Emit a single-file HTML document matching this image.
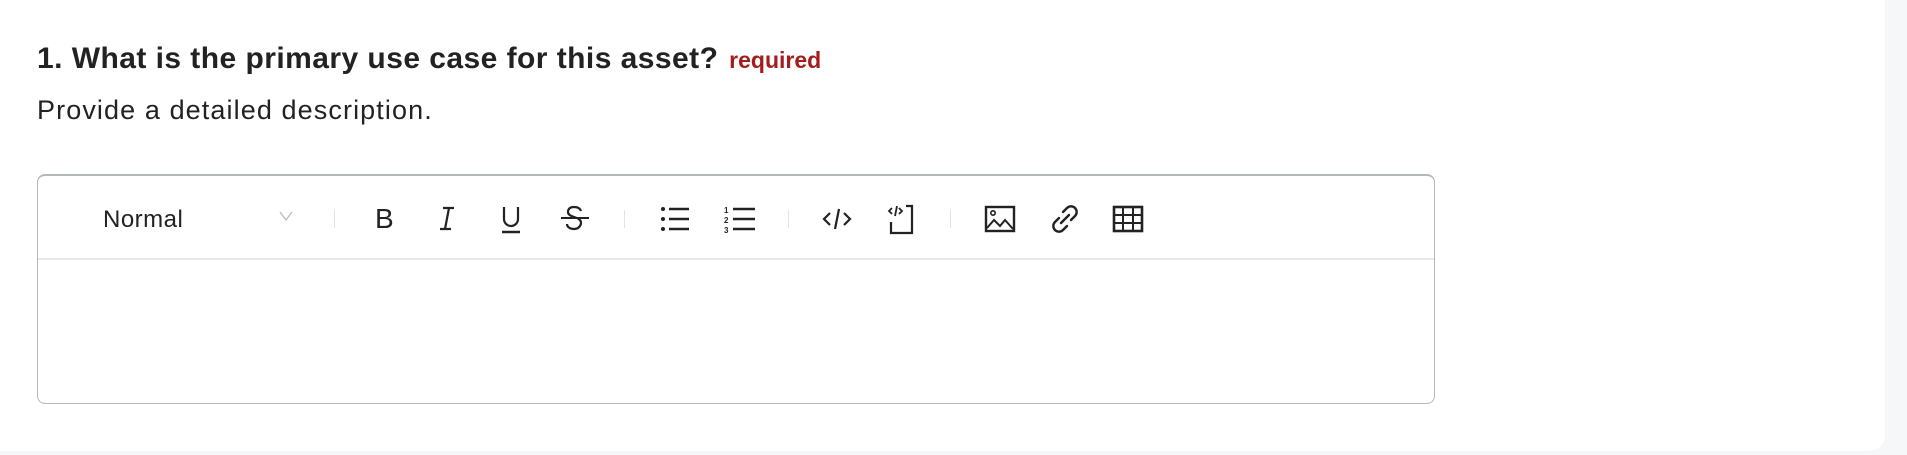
<!DOCTYPE html>
<html><head><meta charset="utf-8"><style>
html,body{margin:0;padding:0;width:1907px;height:455px;background:#f6f7f9;overflow:hidden;font-family:"Liberation Sans",sans-serif;color:#222;}
.card{position:absolute;left:0;top:0;width:1885px;height:451px;background:#fff;border-bottom-right-radius:16px;}
.title{position:absolute;left:37px;top:42px;font-size:30px;font-weight:bold;letter-spacing:0.45px;color:#222;white-space:nowrap;}
.title .req{font-size:23px;color:#a51c1c;letter-spacing:0;margin-left:2px;}
.desc{position:absolute;left:37px;top:95px;font-size:27px;letter-spacing:1.1px;color:#222;white-space:nowrap;}
.box{position:absolute;left:37px;top:174px;width:1396px;height:227px;border:1.5px solid #b4b7bb;border-top-width:2px;border-radius:8px;}
.tb{position:absolute;left:0;top:0;right:0;height:82px;border-bottom:2px solid #e6e7e9;}
.normal{position:absolute;left:65px;top:30px;font-size:24px;letter-spacing:0.5px;color:#222;}
.sep{position:absolute;top:34px;width:1px;height:18px;background:#e2e3e5;}
svg{position:absolute;top:28px;}
</style></head><body>
<div class="card">
<div class="title">1. What is the primary use case for this asset? <span class="req">required</span></div>
<div class="desc">Provide a detailed description.</div>
<div class="box"><div class="tb">
<div class="normal">Normal</div>
<svg style="left:240px;top:34px" width="16" height="12" viewBox="0 0 16 12"><path d="M2 2l6 8 6-8" fill="none" stroke="#b9bcc0" stroke-width="1.3"/></svg>
<div class="sep" style="left:296px"></div>
<svg style="left:334px" width="26" height="28" viewBox="0 0 26 28"><text x="3" y="24" font-size="28" font-family="Liberation Sans" fill="#222">B</text></svg>
<svg style="left:396px" width="26" height="28" viewBox="0 0 26 28"><path d="M9 4h11M6 25h11M15 4l-4 21" stroke="#222" stroke-width="2.2" fill="none"/></svg>
<svg style="left:460px" width="26" height="30" viewBox="0 0 26 30"><path d="M6 3v12a7 7 0 0 0 14 0V3" stroke="#222" stroke-width="2.2" fill="none"/><path d="M4 28h18" stroke="#222" stroke-width="2.4"/></svg>
<svg style="left:522px" width="30" height="30" viewBox="0 0 30 30"><path d="M21 7c-1-3-4-4-7-4-4 0-6 2-6 5 0 6 13 4 13 11 0 3-3 6-7 6-4 0-7-2-7-5" stroke="#222" stroke-width="2.2" fill="none"/><path d="M1 14h28" stroke="#222" stroke-width="2"/></svg>
<div class="sep" style="left:586px"></div>
<svg style="left:622px" width="30" height="30" viewBox="0 0 30 30"><g fill="#222"><circle cx="3" cy="5" r="2"/><circle cx="3" cy="15" r="2"/><circle cx="3" cy="25" r="2"/></g><path d="M9 5h20M9 15h20M9 25h20" stroke="#222" stroke-width="2.4"/></svg>
<svg style="left:686px" width="32" height="30" viewBox="0 0 32 30"><text x="0" y="9" font-size="8" font-family="Liberation Sans" font-weight="bold" fill="#222">1</text><text x="0" y="19" font-size="8" font-family="Liberation Sans" font-weight="bold" fill="#222">2</text><text x="0" y="29" font-size="8" font-family="Liberation Sans" font-weight="bold" fill="#222">3</text><path d="M9 5h22M9 15h22M9 25h22" stroke="#222" stroke-width="2.4"/></svg>
<div class="sep" style="left:750px"></div>
<svg style="left:784px" width="30" height="30" viewBox="0 0 30 30"><path d="M8 9l-6 6 6 6M22 9l6 6-6 6M17 5l-4 20" stroke="#222" stroke-width="2.2" fill="none"/></svg>
<svg style="left:848px" width="30" height="32" viewBox="0 0 30 32"><path d="M6 4l-3 3 3 3M13 4l3 3-3 3M11 2l-2 10" stroke="#222" stroke-width="1.8" fill="none"/><path d="M20 2h6v27H5v-11" stroke="#222" stroke-width="2.2" fill="none"/></svg>
<div class="sep" style="left:912px"></div>
<svg style="left:946px" width="32" height="30" viewBox="0 0 32 30"><rect x="2" y="3" width="28" height="24" stroke="#222" stroke-width="2.4" fill="none"/><circle cx="9" cy="9" r="2.2" stroke="#222" stroke-width="1.6" fill="none"/><path d="M3 24l7-8 6 6 5-6 8 9" stroke="#222" stroke-width="2" fill="none"/></svg>
<svg style="left:1012px" width="30" height="30" viewBox="0 0 30 30"><path d="M13 8l4-4a5 5 0 0 1 8 8l-4 4M17 22l-4 4a5 5 0 0 1-8-8l4-4M11 19l8-8" stroke="#222" stroke-width="2.4" fill="none" stroke-linecap="round"/></svg>
<svg style="left:1074px" width="32" height="30" viewBox="0 0 32 30"><rect x="2" y="3" width="28" height="24" stroke="#222" stroke-width="2.6" fill="none"/><path d="M2 11h28M2 19h28M11 3v24M21 3v24" stroke="#222" stroke-width="2"/></svg>
</div></div>
</div>
</body></html>
